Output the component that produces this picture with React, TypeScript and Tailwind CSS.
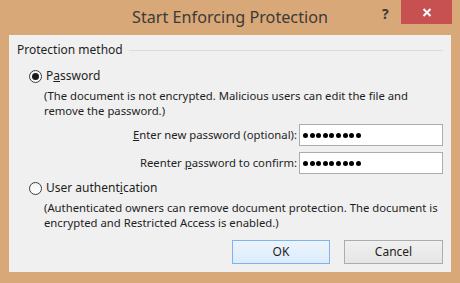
import React from 'react'

const font = { fontFamily: '"Noto Sans", "Open Sans", Arial, sans-serif' }

function Radio({ checked }: { checked?: boolean }) {
  return (
    <span className="flex h-[13px] w-[13px] shrink-0 items-center justify-center rounded-full border border-[#3c3c3c] bg-gradient-to-b from-[#f4f4f4] to-[#ffffff]">
      {checked && <span className="h-[7px] w-[7px] rounded-full bg-[#1a1a1a]" />}
    </span>
  )
}

function PasswordBox() {
  return (
    <div className="flex h-[22px] w-[144px] items-center gap-[1.6px] border border-[#acacac] bg-white pl-[3px]">
      {Array.from({ length: 9 }).map((_, i) => (
        <span key={i} className="h-[5px] w-[5px] rounded-full bg-black" />
      ))}
    </div>
  )
}

export default function App() {
  return (
    <div className="flex h-[283px] w-[460px] flex-col bg-[#d8a878] text-[11.3px] text-[#1e1e1e]" style={font}>
      {/* title bar */}
      <div className="relative flex h-[35px] shrink-0 items-center justify-center">
        <span className="text-[16.2px] text-[#3e3a36]">Start Enforcing Protection</span>
        <span className="absolute left-[382px] top-[3px] text-[14px] font-bold text-[#3e3a36]">?</span>
        <button className="absolute right-[8px] top-0 flex h-[24px] w-[51px] items-center justify-center bg-[#c75050] text-white">
          <svg width="10" height="9" viewBox="0 0 10 9">
            <path d="M1.5 1 L8.5 8 M8.5 1 L1.5 8" stroke="white" strokeWidth="2" />
          </svg>
        </button>
      </div>

      {/* dialog body */}
      <div className="mx-[9px] flex h-[237px] flex-col bg-[#f0f0f0] px-[8px]">
        <div className="mt-[8px] flex h-[14px] items-center gap-[6px]">
          <span className="whitespace-nowrap text-[12px] leading-[14px]">Protection method</span>
          <span className="h-px flex-1 bg-[#dcdcdc]" />
        </div>

        <div className="ml-[12px] mt-[12px] flex h-[14px] items-center gap-[4px]">
          <Radio checked />
          <span className="text-[12px]">
            P<u>a</u>ssword
          </span>
        </div>

        <div className="ml-[27px] mt-[6px] whitespace-nowrap leading-[14.5px]">
          (The document is not encrypted. Malicious users can edit the file and
          <br />
          remove the password.)
        </div>

        <div className="mt-[6px] flex flex-col items-end gap-[6px]">
          <div className="flex items-center gap-[2px]">
            <span className="whitespace-nowrap">
              <u>E</u>nter new password (optional):
            </span>
            <PasswordBox />
          </div>
          <div className="flex items-center gap-[2px]">
            <span className="whitespace-nowrap">
              Reenter <u>p</u>assword to confirm:
            </span>
            <PasswordBox />
          </div>
        </div>

        <div className="ml-[12px] mt-[7px] flex h-[14px] items-center gap-[4px]">
          <Radio />
          <span className="text-[12px]">
            User authent<u>i</u>cation
          </span>
        </div>

        <div className="ml-[27px] mt-[6px] whitespace-nowrap leading-[14.5px]">
          (Authenticated owners can remove document protection. The document is
          <br />
          encrypted and Restricted Access is enabled.)
        </div>

        <div className="mt-auto mb-[8px] flex justify-end gap-[14px]">
          <button className="h-[24px] w-[98px] border border-[#7eb4ea] bg-gradient-to-b from-[#ecf4fc] to-[#dcecfc] text-[12px]">
            OK
          </button>
          <button className="h-[24px] w-[99px] border border-[#acacac] bg-gradient-to-b from-[#f0f0f0] to-[#e5e5e5] text-[12px]">
            Cancel
          </button>
        </div>
      </div>
    </div>
  )
}
